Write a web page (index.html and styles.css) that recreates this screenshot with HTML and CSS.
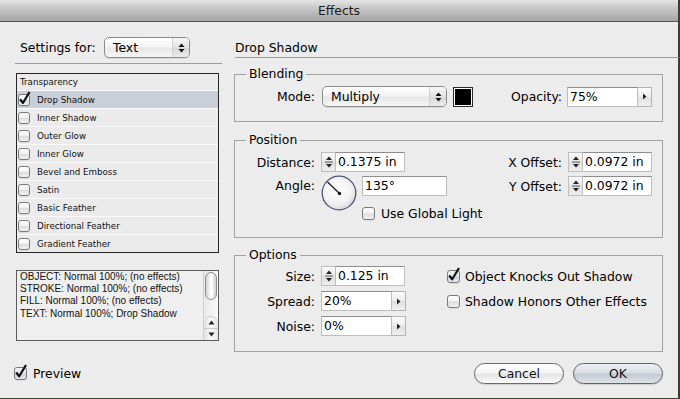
FILE: index.html
```html
<!DOCTYPE html>
<html>
<head>
<meta charset="utf-8">
<title>Effects</title>
<link rel="stylesheet" href="styles.css">
</head>
<body>
<div class="window">
  <div class="titlebar">Effects</div>
  <div class="main">
    <div class="left">
      <div class="settings">
        <span class="settings-label">Settings for:</span>
        <div class="popup popup-text">
          <span class="popup-value">Text</span>
          <span class="popup-arrows"><svg width="7" height="10" viewBox="0 0 7 10"><polygon points="0.5,4 3.5,0.5 6.5,4" fill="#111"/><polygon points="0.5,6 6.5,6 3.5,9.5" fill="#111"/></svg></span>
        </div>
      </div>
      <div class="divider"></div>
      <ul class="effects-list">
        <li class="list-header">Transparency</li>
        <li class="list-row selected"><span class="cb cb-small"><svg class="check" width="14" height="16" viewBox="0 0 14 16"><path d="M2 8.2 L5 12 L11.5 1" fill="none" stroke="#111" stroke-width="2.2" stroke-linejoin="round"/></svg></span>Drop Shadow</li>
        <li class="list-row"><span class="cb cb-small"></span>Inner Shadow</li>
        <li class="list-row"><span class="cb cb-small"></span>Outer Glow</li>
        <li class="list-row"><span class="cb cb-small"></span>Inner Glow</li>
        <li class="list-row"><span class="cb cb-small"></span>Bevel and Emboss</li>
        <li class="list-row"><span class="cb cb-small"></span>Satin</li>
        <li class="list-row"><span class="cb cb-small"></span>Basic Feather</li>
        <li class="list-row"><span class="cb cb-small"></span>Directional Feather</li>
        <li class="list-row"><span class="cb cb-small"></span>Gradient Feather</li>
      </ul>
      <div class="summary">
        <div class="summary-text">
          <div>OBJECT: Normal 100%; (no effects)</div>
          <div>STROKE: Normal 100%; (no effects)</div>
          <div>FILL: Normal 100%; (no effects)</div>
          <div>TEXT: Normal 100%; Drop Shadow</div>
        </div>
        <div class="scrollbar">
          <div class="thumb"></div>
          <div class="track"></div>
          <div class="sb-arrow sb-up"><svg width="7" height="5" viewBox="0 0 7 5"><polygon points="0.5,4.5 3.5,0.5 6.5,4.5" fill="#222"/></svg></div>
          <div class="sb-arrow sb-down"><svg width="7" height="5" viewBox="0 0 7 5"><polygon points="0.5,0.5 6.5,0.5 3.5,4.5" fill="#222"/></svg></div>
        </div>
      </div>
    </div>

    <div class="right">
      <h1 class="section-title">Drop Shadow</h1>

      <fieldset class="group group-blending">
        <legend>Blending</legend>
        <div class="row row-blend">
          <span class="lbl">Mode:</span>
          <div class="popup popup-mode">
            <span class="popup-value">Multiply</span>
            <span class="popup-arrows"><svg width="7" height="10" viewBox="0 0 7 10"><polygon points="0.5,4 3.5,0.5 6.5,4" fill="#111"/><polygon points="0.5,6 6.5,6 3.5,9.5" fill="#111"/></svg></span>
          </div>
          <div class="swatch"><div class="swatch-fill"></div></div>
          <div class="push-right">
            <span class="lbl-inline">Opacity:</span>
            <div class="field field-opacity">75%</div>
            <div class="arrow-btn"><svg width="5" height="7" viewBox="0 0 5 7"><polygon points="1,0.5 4.5,3.5 1,6.5" fill="#222"/></svg></div>
          </div>
        </div>
      </fieldset>

      <fieldset class="group group-position">
        <legend>Position</legend>
        <div class="pos-grid">
          <div class="col">
            <div class="row">
              <span class="lbl">Distance:</span>
              <div class="stepper"><svg width="12" height="18" viewBox="0 0 12 18"><polygon points="3,7 6,3.5 9,7" fill="#222"/><line x1="2" y1="9" x2="10" y2="9" stroke="#555" stroke-width="1"/><polygon points="3,11 9,11 6,14.5" fill="#222"/></svg></div>
              <div class="field field-num">0.1375 in</div>
            </div>
            <div class="angle-row">
              <span class="lbl">Angle:</span>
              <svg class="dial" width="36" height="36" viewBox="0 0 36 36">
                <defs><radialGradient id="dialg" cx="0.45" cy="0.4" r="0.6"><stop offset="0" stop-color="#ffffff"/><stop offset="0.7" stop-color="#f2f2f2"/><stop offset="1" stop-color="#d9d9d9"/></radialGradient></defs>
                <circle cx="18" cy="18" r="16.8" fill="url(#dialg)" stroke="#4b5779" stroke-width="1.3"/>
                <line x1="18.5" y1="18.5" x2="6.5" y2="7" stroke="#1a1a1a" stroke-width="1.2"/>
                <circle cx="18.5" cy="18.5" r="1.7" fill="#111"/>
              </svg>
              <div class="angle-col">
                <div class="field field-angle">135°</div>
                <div class="checkrow checkrow-global"><span class="cb"></span><span class="cb-text">Use Global Light</span></div>
              </div>
            </div>
          </div>
          <div class="col col-right">
            <div class="row">
              <span class="lbl-inline">X Offset:</span>
              <div class="stepper"><svg width="12" height="18" viewBox="0 0 12 18"><polygon points="3,7 6,3.5 9,7" fill="#222"/><line x1="2" y1="9" x2="10" y2="9" stroke="#555" stroke-width="1"/><polygon points="3,11 9,11 6,14.5" fill="#222"/></svg></div>
              <div class="field field-num">0.0972 in</div>
            </div>
            <div class="row row-gap">
              <span class="lbl-inline">Y Offset:</span>
              <div class="stepper"><svg width="12" height="18" viewBox="0 0 12 18"><polygon points="3,7 6,3.5 9,7" fill="#222"/><line x1="2" y1="9" x2="10" y2="9" stroke="#555" stroke-width="1"/><polygon points="3,11 9,11 6,14.5" fill="#222"/></svg></div>
              <div class="field field-num">0.0972 in</div>
            </div>
          </div>
        </div>
      </fieldset>

      <fieldset class="group group-options">
        <legend>Options</legend>
        <div class="opt-grid">
          <div class="col">
            <div class="row">
              <span class="lbl">Size:</span>
              <div class="stepper"><svg width="12" height="18" viewBox="0 0 12 18"><polygon points="3,7 6,3.5 9,7" fill="#222"/><line x1="2" y1="9" x2="10" y2="9" stroke="#555" stroke-width="1"/><polygon points="3,11 9,11 6,14.5" fill="#222"/></svg></div>
              <div class="field field-num">0.125 in</div>
            </div>
            <div class="row row-gap5">
              <span class="lbl">Spread:</span>
              <div class="field field-pct">20%</div>
              <div class="arrow-btn"><svg width="5" height="7" viewBox="0 0 5 7"><polygon points="1,0.5 4.5,3.5 1,6.5" fill="#222"/></svg></div>
            </div>
            <div class="row row-gap5">
              <span class="lbl">Noise:</span>
              <div class="field field-pct">0%</div>
              <div class="arrow-btn"><svg width="5" height="7" viewBox="0 0 5 7"><polygon points="1,0.5 4.5,3.5 1,6.5" fill="#222"/></svg></div>
            </div>
          </div>
          <div class="col col-checks">
            <div class="row">
              <span class="cb cb-on"><svg class="check" width="14" height="16" viewBox="0 0 14 16"><path d="M2.2 8.5 L5.2 12.3 L12 1" fill="none" stroke="#111" stroke-width="2.2" stroke-linejoin="round"/></svg></span>
              <span class="cb-text">Object Knocks Out Shadow</span>
            </div>
            <div class="row row-gap5">
              <span class="cb"></span>
              <span class="cb-text">Shadow Honors Other Effects</span>
            </div>
          </div>
        </div>
      </fieldset>
    </div>
  </div>

  <div class="footer">
    <div class="preview">
      <span class="cb cb-on"><svg class="check" width="14" height="16" viewBox="0 0 14 16"><path d="M2.2 8.5 L5.2 12.3 L12 1" fill="none" stroke="#111" stroke-width="2.2" stroke-linejoin="round"/></svg></span>
      <span class="cb-text">Preview</span>
    </div>
    <div class="buttons">
      <button class="btn">Cancel</button>
      <button class="btn btn-default">OK</button>
    </div>
  </div>
</div>
</body>
</html>
```

FILE: styles.css
```css
* { box-sizing: border-box; }
html, body { margin: 0; padding: 0; }
body {
  width: 680px;
  height: 399px;
  overflow: hidden;
  background: #3b4136;
  font-family: "DejaVu Sans", "Noto Sans", sans-serif;
  font-size: 12.4px;
  color: #000;
}
.window {
  width: 679px;
  height: 398px;
  background: #ececec;
  border-right: 1px solid #3a3a3a;
  display: flex;
  flex-direction: column;
}
.titlebar {
  flex: none;
  height: 22px;
  line-height: 21px;
  text-align: center;
  color: #1c1c1c;
  border-bottom: 1px solid #555;
  background: linear-gradient(#e4e4e4, #cacaca 35%, #b3b3b3 75%, #a6a6a6);
}
.main {
  flex: none;
  height: 330px;
  display: flex;
}

/* ---------- left column ---------- */
.left {
  flex: none;
  width: 203px;
  margin: 15px 0 0 16px;
  display: flex;
  flex-direction: column;
}
.settings {
  display: flex;
  align-items: center;
  height: 21px;
  padding-left: 4px;
}
.settings-label { width: 84px; flex: none; }
.popup {
  display: flex;
  align-items: center;
  height: 21px;
  border: 1px solid #8b8b8b;
  border-radius: 5px;
  background: linear-gradient(#ffffff, #f4f4f4 45%, #e7e7e7 55%, #f7f7f7);
  box-shadow: 0 1px 0 rgba(0,0,0,0.08);
  flex: none;
}
.popup-value { flex: 1; padding-left: 8px; line-height: 19px; }
.popup-arrows {
  width: 17px;
  height: 19px;
  display: flex;
  align-items: center;
  justify-content: center;
  border-left: 1px solid #d4d4d4;
  border-radius: 0 4px 4px 0;
  background: linear-gradient(#f7f7f7, #e2e2e2 50%, #d6d6d6 51%, #ececec);
}
.popup-text { width: 86px; }
.divider {
  height: 1px;
  background: #9c9c9c;
  margin: 5px -3px 0 -1px;
}
.effects-list {
  list-style: none;
  margin: 9px 0 0;
  padding: 0;
  height: 180px;
  border: 1px solid #262626;
  background: #ebebeb;
  font-size: 8.7px;
  color: #111;
}
.list-header {
  height: 16px;
  line-height: 16px;
  padding-left: 3px;
}
.list-row {
  height: 18px;
  border-top: 1px solid #fafafa;
  display: flex;
  align-items: center;
}
.list-row.selected { background: #c8cfd9; }
.cb {
  position: relative;
  flex: none;
  width: 13px;
  height: 13px;
  border: 1px solid #7a7a7a;
  border-radius: 3px;
  background: linear-gradient(#ffffff, #f1f1f1 45%, #dedede 55%, #f3f3f3);
  box-shadow: 0 1px 0 rgba(0,0,0,0.06);
}
.cb-small {
  width: 12px;
  height: 12px;
  margin: 0 7px 0 1px;
}
.cb-on { background: linear-gradient(#f4f6f9, #e0e5eb 45%, #cdd4dc 55%, #e4e8ee); }
.check {
  position: absolute;
  left: -1px;
  top: -4px;
  overflow: visible;
}
.summary {
  margin-top: 17px;
  height: 71px;
  border: 1px solid #5c5c5c;
  background: #efefef;
  display: flex;
}
.summary-text {
  flex: 1;
  padding: 0 0 0 3px;
  font-family: "Liberation Sans", Arial, sans-serif;
  font-size: 10px;
  line-height: 12.2px;
  color: #111;
}
.scrollbar {
  flex: none;
  width: 15px;
  border-left: 1px solid #cfcfcf;
  background: linear-gradient(90deg, #e9e9e9, #fafafa);
  display: flex;
  flex-direction: column;
}
.thumb {
  height: 28px;
  margin: 1px 1px 0;
  border: 1px solid #8f8f8f;
  border-radius: 7px;
  background: linear-gradient(90deg, #d2d2d2, #f9f9f9 45%, #ffffff 55%, #cfcfcf);
}
.track { flex: 1; }
.sb-arrow {
  height: 12px;
  display: flex;
  align-items: center;
  justify-content: center;
  border-top: 1px solid #c9c9c9;
  background: linear-gradient(90deg, #e2e2e2, #fafafa 50%, #e6e6e6);
}
.sb-up { border-radius: 7px 7px 0 0; }

/* ---------- right column ---------- */
.right {
  flex: none;
  width: 429px;
  margin-left: 15px;
  display: flex;
  flex-direction: column;
}
.section-title {
  margin: 18px -16px 0 1px;
  padding: 0 0 2px;
  line-height: 15px;
  font-size: 12.4px;
  font-weight: normal;
  border-bottom: 1px solid #9a9a9a;
}
.group {
  margin: 0;
  min-width: 0;
  border: 1px solid #a2a2a2;
  padding: 0 10px 0 0;
}
.group legend {
  margin-left: 11px;
  padding: 0 3px;
  line-height: 14px;
}
.group-blending { margin-top: 9px; padding-top: 5px; padding-bottom: 14px; }
.group-position { margin-top: 11px; padding-top: 5px; padding-bottom: 17px; }
.group-options { margin-top: 10px; padding-top: 4px; padding-bottom: 15px; }

.row {
  display: flex;
  align-items: center;
  height: 20px;
}
.row-blend { height: 21px; }
.row-gap { margin-top: 4px; }
.row-gap5 { margin-top: 5px; }
.lbl {
  flex: none;
  width: 80px;
  margin-right: 6px;
  text-align: right;
}
.lbl-inline { flex: none; margin-right: 6px; }
.popup-mode { width: 125px; margin-left: 1px; }
.swatch {
  flex: none;
  width: 20px;
  height: 20px;
  margin-left: 6px;
  border: 1px solid #2a2a2a;
  padding: 1px;
  background: #fff;
}
.swatch-fill { width: 100%; height: 100%; background: #000; }
.push-right {
  margin-left: auto;
  display: flex;
  align-items: center;
}
.push-right .lbl-inline { margin-right: 5px; }
.field {
  flex: none;
  height: 20px;
  line-height: 18px;
  padding-left: 2px;
  background: #fff;
  border: 1px solid #bdbdbd;
  border-top-color: #8e8e8e;
  white-space: nowrap;
}
.field-opacity { width: 71px; }
.field-num { width: 70px; }
.field-pct { width: 71px; }
.field-angle { width: 85px; }
.arrow-btn {
  flex: none;
  width: 14px;
  height: 20px;
  display: flex;
  align-items: center;
  justify-content: center;
  border: 1px solid #b4b4b4;
  border-left: none;
  background: linear-gradient(#fbfbfb, #ececec 50%, #e0e0e0 51%, #f0f0f0);
}
.stepper {
  flex: none;
  width: 14px;
  height: 20px;
  display: flex;
  align-items: center;
  justify-content: center;
  border: 1px solid #bdbdbd;
  border-right: none;
  background: linear-gradient(#fafafa, #e9e9e9 50%, #dedede 51%, #efefef);
}
.pos-grid, .opt-grid { display: flex; }
.col { display: flex; flex-direction: column; }
.col-right { margin-left: auto; align-items: flex-end; }
.angle-row {
  display: flex;
  align-items: flex-start;
  margin-top: 4px;
}
.angle-row .lbl { line-height: 20px; }
.dial { flex: none; margin-top: -1px; }
.angle-col {
  display: flex;
  flex-direction: column;
  margin-left: 5px;
}
.checkrow {
  display: flex;
  align-items: center;
  height: 14px;
}
.checkrow-global { margin-top: 10px; }
.cb-text { margin-left: 6px; white-space: nowrap; }
.col-checks { margin-left: 41px; }
.col-checks .cb-text { margin-left: 5px; }

/* ---------- footer ---------- */
.footer {
  flex: 1;
  display: flex;
  align-items: flex-start;
  padding: 11px 15px 0 14px;
}
.preview {
  display: flex;
  align-items: center;
  height: 21px;
}
.buttons {
  margin-left: auto;
  display: flex;
}
.btn {
  width: 90px;
  height: 21px;
  padding: 0;
  font-family: inherit;
  font-size: 12.4px;
  color: #111;
  line-height: 19px;
  border: 1px solid #6a6a6a;
  border-radius: 11px;
  background: linear-gradient(#ffffff, #f5f5f5 45%, #e4e4e4 55%, #fbfbfb);
  box-shadow: 0 1px 1px rgba(0,0,0,0.12);
}
.btn + .btn { margin-left: 9px; }
.btn-default {
  border-color: #5f6368;
  background: linear-gradient(#eef1f4, #d9dee4 45%, #c3cad2 55%, #dfe4e9);
}
```
